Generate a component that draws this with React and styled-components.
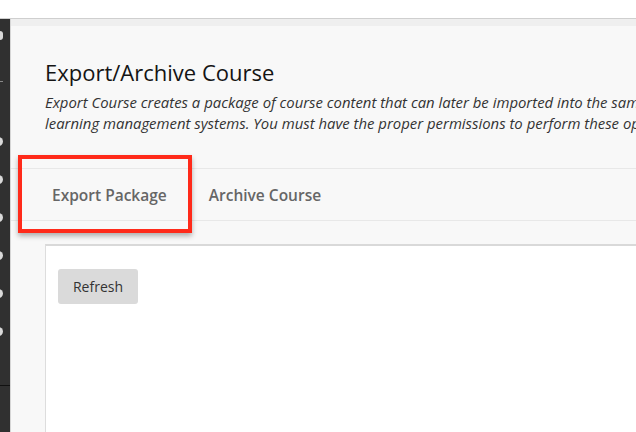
import React from "react";
import styled, { createGlobalStyle } from "styled-components";

const GlobalStyle = createGlobalStyle`
  html, body {
    margin: 0;
    padding: 0;
    background: #ffffff;
    font-family: "Open Sans", "Noto Sans", "DejaVu Sans", sans-serif;
    overflow: hidden;
  }
`;

const Page = styled.div`
  width: 636px;
  height: 432px;
  display: flex;
  flex-direction: column;
  overflow: hidden;
`;

const TopBar = styled.div`
  height: 18px;
  flex-shrink: 0;
  background: #ffffff;
  border-bottom: 1px solid #cfcfcf;
`;

const Body = styled.div`
  flex: 1;
  display: flex;
  min-height: 0;
`;

const Sidebar = styled.nav`
  width: 10px;
  flex-shrink: 0;
  background: #303030;
  border-right: 1px solid #d6d6d6;
  display: flex;
  flex-direction: column;
  overflow: hidden;
`;

const SideMenu = styled.div`
  display: flex;
  flex-direction: column;
  gap: ${(p) => p.$gap || 0}px;
  padding-top: ${(p) => p.$top || 0}px;
`;

const Dot = styled.span`
  display: block;
  flex-shrink: 0;
  width: 9px;
  height: 9px;
  margin-left: -6px;
  border-radius: ${(p) => (p.$square ? "3px" : "50%")};
  background: #d9d9d9;
`;

const Tick = styled.span`
  display: block;
  flex-shrink: 0;
  width: 3px;
  height: 1px;
  margin-top: 41px;
  background: #8a8a8a;
`;

const SideRule = styled.div`
  flex-shrink: 0;
  margin-top: 49px;
  height: 1px;
  background: #111111;
`;

const Main = styled.main`
  flex: 1;
  background: #f8f8f8;
  display: flex;
  flex-direction: column;
  min-width: 0;
`;

const Shade = styled.div`
  height: 7px;
  background: #efefef;
`;

const Header = styled.header`
  padding: 31px 34px 0;
`;

const Title = styled.h1`
  margin: 0;
  font-size: 22px;
  line-height: 30px;
  font-weight: 400;
  color: #141414;
  white-space: nowrap;
`;

const Intro = styled.p`
  margin: 5px 0 0;
  font-size: 14.9px;
  line-height: 21px;
  font-style: italic;
  color: #333333;
  white-space: nowrap;
`;

const TabRow = styled.div`
  position: relative;
  margin-top: 34px;
  height: 51px;
  display: flex;
  align-items: center;
  padding-left: 20px;
  border-top: 1px solid #e8e8e8;
  border-bottom: 1px solid #e8e8e8;
`;

const Tab = styled.button`
  border: 0;
  background: none;
  padding: 0 21px;
  font-family: inherit;
  font-size: 15.5px;
  font-weight: 600;
  color: #666666;
  cursor: pointer;
`;

const Highlight = styled.div`
  position: absolute;
  left: 7px;
  top: -14px;
  width: 166px;
  height: 70px;
  border: 4px solid #ff2a1a;
  box-shadow: 0 3px 5px rgba(0, 0, 0, 0.3);
  pointer-events: none;
`;

const Panel = styled.section`
  flex: 1;
  margin: 23px 0 0 34px;
  background: #ffffff;
  border-top: 2px solid #d9d9d9;
  border-left: 1px solid #dddddd;
  padding: 23px 12px;
`;

const Button = styled.button`
  width: 80px;
  height: 35px;
  border: 0;
  border-radius: 3px;
  background: #dadada;
  font-family: inherit;
  font-size: 14px;
  color: #333333;
  cursor: pointer;
`;

export default function App() {
  return (
    <Page>
      <GlobalStyle />
      <TopBar />
      <Body>
        <Sidebar>
          <SideMenu $top={12}>
            <Dot $square />
            <Tick />
          </SideMenu>
          <SideMenu $top={55} $gap={29}>
            <Dot />
            <Dot />
            <Dot />
            <Dot />
            <Dot />
            <Dot />
          </SideMenu>
          <SideRule />
        </Sidebar>
        <Main>
          <Shade />
          <Header>
            <Title>Export/Archive Course</Title>
            <Intro>
              Export Course creates a package of course content that can later be imported into the same course.
              <br />
              learning management systems. You must have the proper permissions to perform these operations.
            </Intro>
          </Header>
          <TabRow>
            <Tab>Export Package</Tab>
            <Tab>Archive Course</Tab>
            <Highlight />
          </TabRow>
          <Panel>
            <Button>Refresh</Button>
          </Panel>
        </Main>
      </Body>
    </Page>
  );
}
